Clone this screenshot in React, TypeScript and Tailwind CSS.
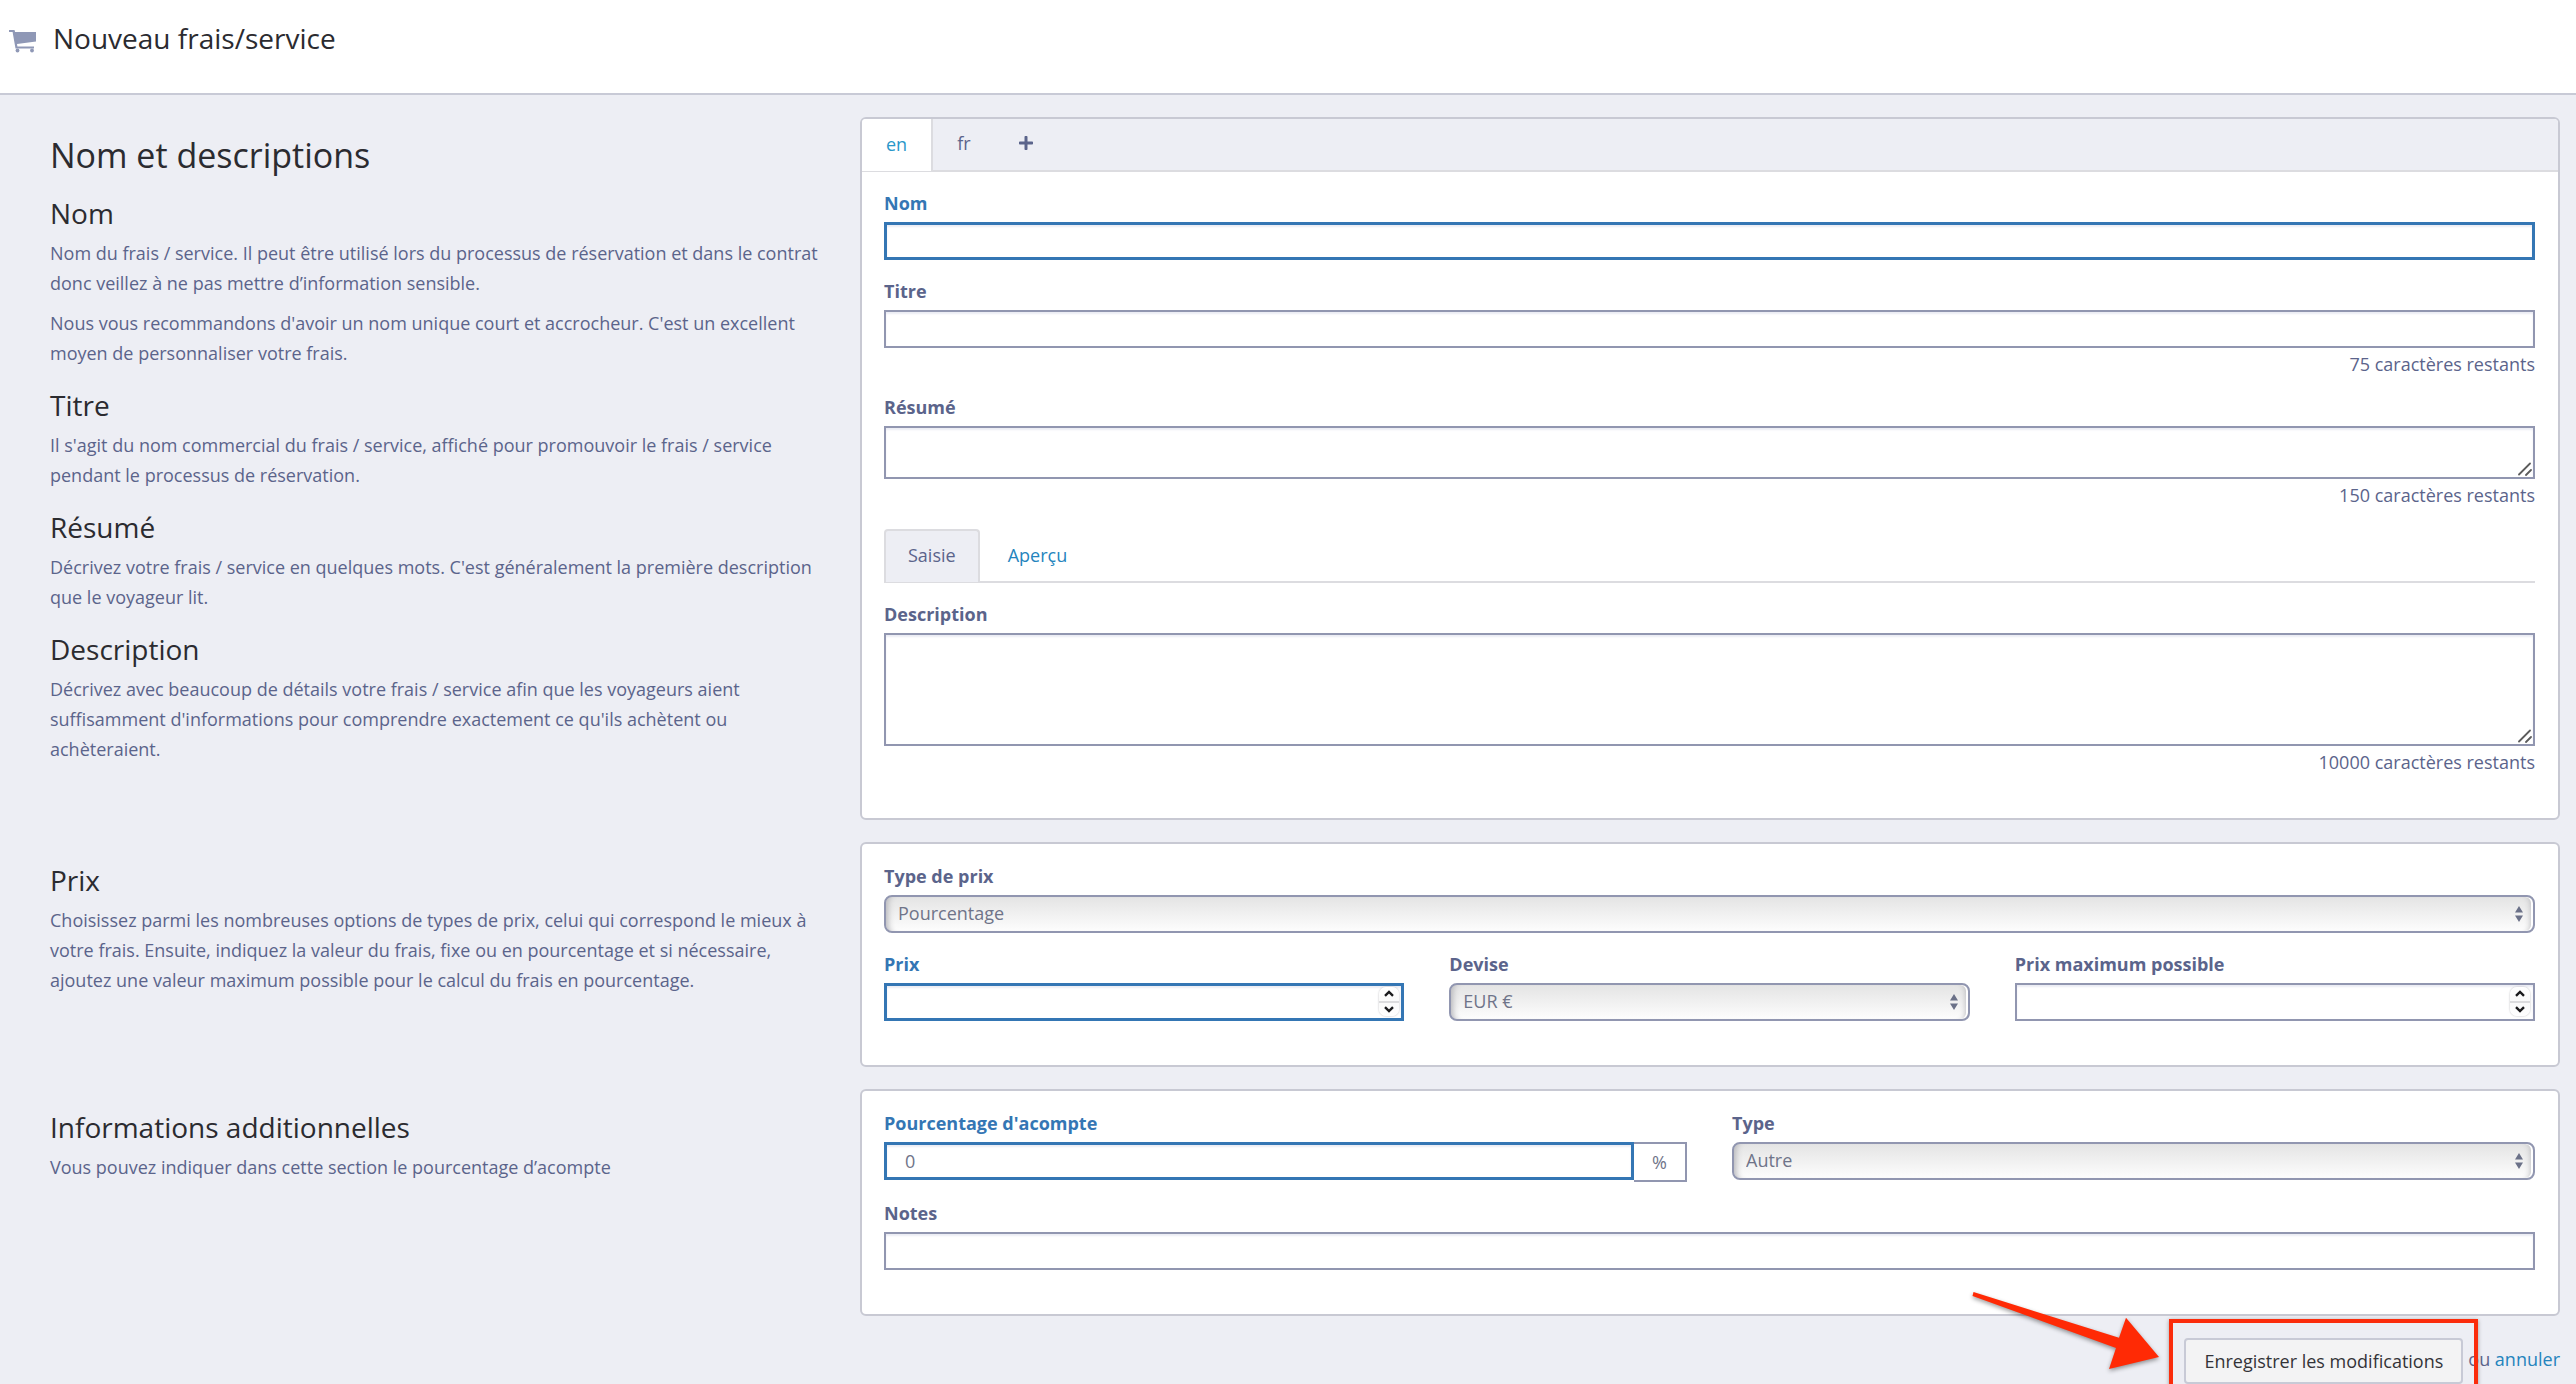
import { useState, type ComponentProps, type ReactNode } from "react";
import { FaPlus } from "react-icons/fa";

const initialForm = {
  name: "",
  title: "",
  summary: "",
  description: "",
  priceType: "Pourcentage",
  price: "",
  currency: "EUR €",
  maxPrice: "",
  deposit: "0",
  type: "Autre",
  notes: "",
};

type FeeForm = typeof initialForm;

export default function App() {
  const [form, setForm] = useState<FeeForm>(initialForm);
  const [locale, setLocale] = useState("en");
  const [mode, setMode] = useState("Saisie");

  function updateField(key: keyof FeeForm, value: string) {
    setForm((current) => ({ ...current, [key]: value }));
  }

  return (
    <div className="h-screen overflow-x-hidden overflow-y-auto bg-[#edeef4] font-['Open_Sans',sans-serif] text-[18px] leading-[30px] text-[#5b648b] [scrollbar-width:none]">
      <header className="flex h-[95px] items-start gap-[17px] border-b-2 border-[#c8cad6] bg-white px-2 pt-[18px]">
        <CartIcon />
        <h1 className="text-[28px] leading-10 text-[#2b2b30]">Nouveau frais/service</h1>
      </header>

      <form onSubmit={(event) => event.preventDefault()} className="pt-[22px] pr-4">
        <div className="grid grid-cols-[43fr_85fr] gap-y-[22px]">
          <Aside>
            <h2 className="text-[34px] leading-[41px] text-[#2b2b30]">Nom et descriptions</h2>
            <Help title="Nom">
              <p>Nom du frais / service. Il peut être utilisé lors du processus de réservation et dans le contrat donc veillez à ne pas mettre d’information sensible.</p>
              <p>Nous vous recommandons d'avoir un nom unique court et accrocheur. C'est un excellent moyen de personnaliser votre frais.</p>
            </Help>
            <Help title="Titre">
              <p>Il s'agit du nom commercial du frais / service, affiché pour promouvoir le frais / service pendant le processus de réservation.</p>
            </Help>
            <Help title="Résumé">
              <p>Décrivez votre frais / service en quelques mots. C'est généralement la première description que le voyageur lit.</p>
            </Help>
            <Help title="Description">
              <p>Décrivez avec beaucoup de détails votre frais / service afin que les voyageurs aient suffisamment d'informations pour comprendre exactement ce qu'ils achètent ou achèteraient.</p>
            </Help>
          </Aside>
          <section className="overflow-hidden rounded-md border-2 border-[#c8c9d3] bg-white">
            <div role="tablist" className="flex h-[53px] border-b-2 border-[#dcdce0] bg-[#edeef4]">
              {["en", "fr"].map((code) => (
                <button
                  key={code}
                  type="button"
                  role="tab"
                  aria-selected={locale === code}
                  onClick={() => setLocale(code)}
                  className={
                    locale === code
                      ? "-mb-px border-r-2 border-[#dcdce0] bg-white px-6 pb-[3px] text-[#2a97c9]"
                      : "px-6 pb-[3px]"
                  }
                >
                  {code}
                </button>
              ))}
              <button type="button" aria-label="Ajouter une langue" className="px-[23px] pb-[3px]">
                <FaPlus className="size-4" />
              </button>
            </div>
            <div className="flex flex-col gap-4 pt-4 pr-[23px] pb-[44px] pl-[22px]">
              <Field id="name" label="Nom" required>
                <TextInput id="name" required value={form.name} onChange={(event) => updateField("name", event.target.value)} />
              </Field>
              <Field id="title" label="Titre" hint="75 caractères restants">
                <TextInput id="title" maxLength={75} value={form.title} onChange={(event) => updateField("title", event.target.value)} />
              </Field>
              <Field id="summary" label="Résumé" hint="150 caractères restants">
                <TextArea id="summary" height="h-[53px]" maxLength={150} value={form.summary} onChange={(event) => updateField("summary", event.target.value)} />
              </Field>
              <div role="tablist" className="mt-[6px] flex h-[54px] gap-1 border-b-2 border-[#dcdce0]">
                {["Saisie", "Aperçu"].map((name) => (
                  <button
                    key={name}
                    type="button"
                    role="tab"
                    aria-selected={mode === name}
                    onClick={() => setMode(name)}
                    className={
                      mode === name
                        ? "-mb-px rounded-t-sm border-2 border-b-0 border-[#dcdce0] bg-[#edeef4] px-[22px] pb-[3px]"
                        : "border-2 border-b-0 border-transparent px-[22px] pb-[3px] text-[#2484bd]"
                    }
                  >
                    {name}
                  </button>
                ))}
              </div>
              <Field id="description" label="Description" hint="10000 caractères restants">
                <TextArea id="description" height="h-[113px]" maxLength={10000} value={form.description} onChange={(event) => updateField("description", event.target.value)} />
              </Field>
            </div>
          </section>

          <Aside>
            <Help title="Prix">
              <p>Choisissez parmi les nombreuses options de types de prix, celui qui correspond le mieux à votre frais. Ensuite, indiquez la valeur du frais, fixe ou en pourcentage et si nécessaire, ajoutez une valeur maximum possible pour le calcul du frais en pourcentage.</p>
            </Help>
          </Aside>
          <Card>
            <Field id="price-type" label="Type de prix">
              <Select id="price-type" options={["Pourcentage", "Fixe"]} value={form.priceType} onChange={(event) => updateField("priceType", event.target.value)} />
            </Field>
            <div className="grid grid-cols-3 gap-[45px]">
              <Field id="price" label="Prix" required>
                <NumberInput id="price" required value={form.price} onValue={(value) => updateField("price", value)} />
              </Field>
              <Field id="currency" label="Devise">
                <Select id="currency" options={["EUR €", "USD $"]} value={form.currency} onChange={(event) => updateField("currency", event.target.value)} />
              </Field>
              <Field id="max-price" label="Prix maximum possible">
                <NumberInput id="max-price" value={form.maxPrice} onValue={(value) => updateField("maxPrice", value)} />
              </Field>
            </div>
          </Card>

          <Aside>
            <Help title="Informations additionnelles">
              <p>Vous pouvez indiquer dans cette section le pourcentage d’acompte</p>
            </Help>
          </Aside>
          <Card>
            <div className="grid grid-cols-2 gap-[45px]">
              <Field id="deposit" label="Pourcentage d'acompte" required>
                <div className="flex items-start">
                  <TextInput id="deposit" required value={form.deposit} onChange={(event) => updateField("deposit", event.target.value)} />
                  <span className="grid h-10 w-[53px] shrink-0 place-items-center border-2 border-l-0 border-[#9196b0] text-[#6f7489]">%</span>
                </div>
              </Field>
              <Field id="type" label="Type">
                <Select id="type" options={["Autre", "Ménage", "Taxe"]} value={form.type} onChange={(event) => updateField("type", event.target.value)} />
              </Field>
            </div>
            <Field id="notes" label="Notes">
              <TextInput id="notes" value={form.notes} onChange={(event) => updateField("notes", event.target.value)} />
            </Field>
          </Card>
        </div>

        <div className="flex items-start justify-end gap-[5px] pt-[22px]">
          <div className="relative">
            <button type="submit" className="block h-[46px] rounded-sm border-2 border-[#c8cad6] bg-[#f3f3f4] px-[18px] text-[#333338]">
              Enregistrer les modifications
            </button>
            <SaveCallout />
          </div>
          <p className="pt-[6px]">
            ou{" "}
            <a href="#annuler" className="text-[#2484bd]">
              annuler
            </a>
          </p>
        </div>
      </form>
    </div>
  );
}

function Aside({ children }: { children: ReactNode }) {
  return <div className="flex flex-col gap-[17px] pt-[18px] pr-[34px] pl-[50px]">{children}</div>;
}

function Help({ title, children }: { title: string; children: ReactNode }) {
  return (
    <div>
      <h3 className="mb-[5px] text-[28px] leading-10 text-[#2b2b30]">{title}</h3>
      <div className="flex flex-col gap-[10px]">{children}</div>
    </div>
  );
}

function Card({ children }: { children: ReactNode }) {
  return <section className="flex flex-col gap-4 rounded-md border-2 border-[#c8c9d3] bg-white pt-[17px] pr-[23px] pb-[44px] pl-[22px]">{children}</section>;
}

function Field({ id, label, hint, required, children }: { id: string; label: string; hint?: string; required?: boolean; children: ReactNode }) {
  return (
    <div className="min-w-0">
      <label htmlFor={id} className={required ? "mb-1 block font-bold text-[#3476b4]" : "mb-1 block font-bold"}>
        {label}
      </label>
      {children}
      {hint ? <p className="mt-1 text-right leading-6">{hint}</p> : null}
    </div>
  );
}

function TextInput(props: ComponentProps<"input">) {
  return (
    <input
      type="text"
      className="block h-[38px] w-full min-w-0 border-2 border-[#9196b0] bg-white px-[18px] text-[#6f7489] shadow-[inset_0_2px_2px_#ebecf4] outline-none required:border-3 required:border-[#3476b4]"
      {...props}
    />
  );
}

function TextArea({ height, ...props }: ComponentProps<"textarea"> & { height: string }) {
  return (
    <div className="relative">
      <textarea
        className={`block w-full resize-y border-2 border-[#9196b0] bg-white px-[18px] text-[#6f7489] shadow-[inset_0_2px_2px_#ebecf4] outline-none [&::-webkit-resizer]:hidden ${height}`}
        {...props}
      />
      <svg viewBox="0 0 14 14" className="pointer-events-none absolute right-[3px] bottom-[3px] size-[14px]" stroke="#5c5c5c" strokeWidth="1.8" strokeLinecap="round">
        <path d="M1 12.5 12 1.5M8 13l5-5" />
      </svg>
    </div>
  );
}

function NumberInput({ onValue, ...props }: ComponentProps<"input"> & { value: string; onValue: (value: string) => void }) {
  function step(delta: number) {
    onValue(String((Number(props.value) || 0) + delta));
  }

  return (
    <div className="relative">
      <TextInput {...props} inputMode="decimal" onChange={(event) => onValue(event.target.value)} />
      <div className="absolute top-1 right-[5px] flex h-[29px] w-5 flex-col divide-y-2 divide-[#dcdcde] overflow-hidden rounded-[7px] bg-linear-to-b from-white via-[#fafafa] to-white shadow-[0_0_2px_#b4b4b8]">
        <button type="button" aria-label="Augmenter" onClick={() => step(1)} className="grid flex-1 place-items-center">
          <svg viewBox="0 0 10 7" className="h-[7px] w-[10px]" fill="none" stroke="#1c1c1e" strokeWidth="2.4">
            <path d="M1 5.8 5 2l4 3.8" />
          </svg>
        </button>
        <button type="button" aria-label="Diminuer" onClick={() => step(-1)} className="grid flex-1 place-items-center">
          <svg viewBox="0 0 10 7" className="h-[7px] w-[10px]" fill="none" stroke="#1c1c1e" strokeWidth="2.4">
            <path d="M1 1.2 5 5l4-3.8" />
          </svg>
        </button>
      </div>
    </div>
  );
}

function Select({ options, ...props }: ComponentProps<"select"> & { options: string[] }) {
  return (
    <div className="relative">
      <select
        className="block h-[38px] w-full appearance-none rounded-lg border-2 border-[#9196b0] bg-linear-to-b from-[#e4e4e4] to-[#fdfdfd] px-3 pb-[2px] text-[#6f7489] shadow-[inset_-2px_0_0_#fff,inset_8px_0_6px_-6px_#b4b4b8,inset_-8px_0_6px_-6px_#b4b4b8] outline-none"
        {...props}
      >
        {options.map((option) => (
          <option key={option}>{option}</option>
        ))}
      </select>
      <svg viewBox="0 0 8 16" className="pointer-events-none absolute top-[11px] right-3 h-4 w-2" fill="#6b7188">
        <path d="M4 0 8 6.5H0zM4 16 0 9.500h8z" />
      </svg>
    </div>
  );
}

function CartIcon() {
  return (
    <svg viewBox="0 0 28 24" className="mt-3 h-6 w-7" fill="#8f98b6">
      <path d="M1 0h5.500l.6 2H28v9.500L9 14l.4 2.500H26v2H7.500L4.600 2H1z" />
      <circle cx="9.500" cy="20.500" r="1.900" />
      <circle cx="24" cy="20.500" r="1.900" />
    </svg>
  );
}

// Red frame and arrow drawn over the save button
function SaveCallout() {
  return (
    <>
      <div className="pointer-events-none absolute -inset-x-[15px] -inset-y-[19px] border-4 border-[#fb2c0c] shadow-[0_1px_4px_rgba(0,0,0,0.35)]" />
      <svg viewBox="0 0 190 82" className="pointer-events-none absolute -top-[48px] right-full mr-[25px] h-[82px] w-[190px] overflow-visible drop-shadow-[0_2px_2px_rgba(0,0,0,0.4)]" fill="#ff2a05">
        <path d="M4.500 2 150 47.700l7-20L190 67l-50 12 7-21L3.500 6z" />
      </svg>
    </>
  );
}
